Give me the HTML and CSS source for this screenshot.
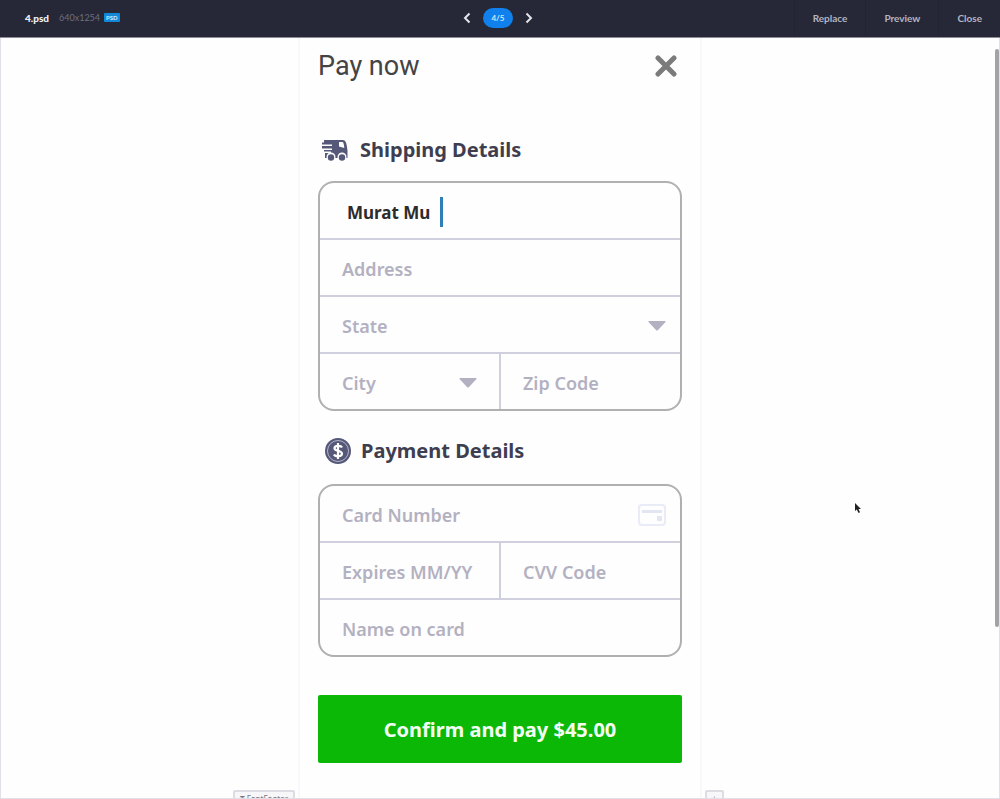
FILE: index.html
```html
<!DOCTYPE html>
<html lang="en">
<head>
<meta charset="UTF-8">
<meta name="viewport" content="width=device-width, initial-scale=1.0">
<title>4.psd</title>
<link rel="stylesheet" href="styles.css">
</head>
<body>
<header class="topbar">
  <div class="file">
    <span class="file-name">4.psd</span>
    <span class="file-size">640x1254</span>
    <span class="file-type">PSD</span>
  </div>
  <nav class="pager">
    <button class="arrow" aria-label="Previous">
      <svg width="8" height="12" viewBox="0 0 8 12"><path d="M6.500 1.500 2 6l4.500 4.500"/></svg>
    </button>
    <span class="page">4/5</span>
    <button class="arrow" aria-label="Next">
      <svg width="8" height="12" viewBox="0 0 8 12"><path d="M1.500 1.500 6 6l-4.500 4.500"/></svg>
    </button>
  </nav>
  <div class="actions">
    <button class="action">Replace</button>
    <button class="action">Preview</button>
    <button class="action">Close</button>
  </div>
</header>

<main class="stage">
  <form class="artboard">
    <div class="title-row">
      <h1>Pay now</h1>
      <button type="button" class="close" aria-label="Close form">
        <svg width="22" height="22" viewBox="0 0 22 22"><path d="M3 3 19 19M19 3 3 19"/></svg>
      </button>
    </div>

    <h2 class="shipping-title">
      <svg width="26" height="22" viewBox="0 0 26 22">
        <path fill="#56587a" d="M2 1h19c2.500 0 3.500 3 4 7l.5 4v7H3v-5h6v-1.500H2V11h8V9.500H0V7h10V5.500H0V3.500h2z"/>
        <path fill="#fefefe" d="M17 3h3.500c1 0 1.500 3 1.800 6L17 7.500z"/>
        <circle cx="9" cy="18" r="4.500" fill="#fefefe"/>
        <circle cx="20" cy="18" r="4.500" fill="#fefefe"/>
        <circle cx="9" cy="18.500" r="3.200" fill="#56587a"/>
        <circle cx="20" cy="18.500" r="3.200" fill="#56587a"/>
      </svg>
      Shipping Details
    </h2>
    <div class="group">
      <div class="row">
        <div class="field active">
          <input type="text" class="typed" value="Murat Mu" aria-label="Full name">
          <span class="caret"></span>
        </div>
      </div>
      <div class="row">
        <div class="field"><input type="text" placeholder="Address" aria-label="Address"></div>
      </div>
      <div class="row">
        <div class="field">
          <select aria-label="State"><option>State</option></select>
          <svg class="drop" width="18" height="10" viewBox="0 0 18 10"><path d="M1 0h16q1 0 .5 1L10 9q-1 1-2 0L.5 1Q0 0 1 0z"/></svg>
        </div>
      </div>
      <div class="row">
        <div class="field">
          <select aria-label="City"><option>City</option></select>
          <svg class="drop" width="18" height="10" viewBox="0 0 18 10"><path d="M1 0h16q1 0 .5 1L10 9q-1 1-2 0L.5 1Q0 0 1 0z"/></svg>
        </div>
        <div class="field"><input type="text" placeholder="Zip Code" aria-label="Zip Code"></div>
      </div>
    </div>

    <h2 class="payment-title">
      <svg width="26" height="26" viewBox="0 0 26 26">
        <circle cx="13" cy="13" r="13" fill="#56587a"/>
        <circle cx="13" cy="13" r="10.500" fill="none" stroke="#b4b5c8"/>
        <path d="M17 9.500C16 7.500 9.500 7 9.500 10.200c0 3.300 7.500 2 7.500 5.500 0 3.300-7 3-8 .8M13 5v16" fill="none" stroke="#fefefe" stroke-width="2.200"/>
      </svg>
      Payment Details
    </h2>
    <div class="group">
      <div class="row">
        <div class="field">
          <input type="text" placeholder="Card Number" aria-label="Card Number">
          <svg class="card" width="28" height="22" viewBox="0 0 28 22">
            <rect x="1" y="1" width="26" height="20" rx="3" fill="none" stroke="#e9ecf7" stroke-width="2"/>
            <path fill="#e2e6f3" d="M4 6h20v3H4zM19 12h5v5h-5z"/>
          </svg>
        </div>
      </div>
      <div class="row">
        <div class="field"><input type="text" placeholder="Expires MM/YY" aria-label="Expires MM/YY"></div>
        <div class="field"><input type="text" placeholder="CVV Code" aria-label="CVV Code"></div>
      </div>
      <div class="row">
        <div class="field"><input type="text" placeholder="Name on card" aria-label="Name on card"></div>
      </div>
    </div>

    <button type="button" class="pay">Confirm and pay $45.00</button>
  </form>

  <span class="tag tag-left"><b>T</b> FontFooter</span>
  <span class="tag tag-right">+</span>
  <div class="scrollbar"></div>
  <svg class="pointer" width="8" height="12" viewBox="0 0 8 12"><path d="M1 1v8l1.800-1.500L4.500 11l1.500-.7-1.500-3.300H7z"/></svg>
</main>
</body>
</html>
```
FILE: styles.css
```css
* {
  box-sizing: border-box;
}
body {
  margin: 0;
  height: 100vh;
  display: flex;
  flex-direction: column;
  background: #fefefe;
  font-family: "Noto Sans", sans-serif;
}
button,
input,
select {
  font-family: inherit;
  border: 0;
  padding: 0;
  background: none;
}
button {
  cursor: pointer;
}

/* top bar */
.topbar {
  height: 38px;
  flex-shrink: 0;
  display: grid;
  grid-template-columns: 1fr auto 1fr;
  align-items: center;
  padding-bottom: 2px;
  background: #262838;
  border-bottom: 1px solid #8d8d98;
  font-family: Lato, sans-serif;
}
.file {
  display: flex;
  align-items: center;
  gap: 10px;
  padding-left: 25px;
}
.file-name {
  color: #f0f0f4;
  font-size: 10px;
  font-weight: 900;
}
.file-size {
  color: #6d6e7c;
  font-size: 9px;
}
.file-type {
  margin-left: -6px;
  padding: 0 2px;
  border-radius: 1px;
  background: #1488d8;
  color: #cfeaff;
  font-size: 6px;
  font-weight: 700;
  line-height: 9px;
}
.pager {
  display: flex;
  align-items: center;
  gap: 12px;
  padding-right: 4px;
}
.arrow {
  display: flex;
}
.arrow path {
  fill: none;
  stroke: #e4e4ec;
  stroke-width: 2;
}
.page {
  width: 30px;
  border-radius: 10px;
  background: #0f80ec;
  color: #cfe6ff;
  font-size: 8px;
  font-weight: 700;
  line-height: 20px;
  text-align: center;
}
.actions {
  display: flex;
  justify-content: flex-end;
  align-self: stretch;
}
.action {
  padding: 0 18px;
  border-left: 1px solid #222433;
  color: #b4b5c0;
  font-size: 10px;
  font-weight: 700;
}

/* canvas */
.stage {
  position: relative;
  flex: 1;
  overflow: hidden;
  border: 1px solid #e0e0e6;
  border-top: 0;
}
.artboard {
  max-width: 404px;
  height: 100%;
  margin: 0 auto;
  padding: 0 18px;
  border: solid #f8f8fa;
  border-width: 0 2px;
}
.title-row {
  display: flex;
  align-items: center;
  justify-content: space-between;
  height: 56px;
  padding-right: 5px;
}
h1 {
  margin: 0;
  color: #444;
  font-family: Roboto, sans-serif;
  font-size: 27px;
  font-weight: 400;
}
.close {
  display: flex;
}
.close path {
  fill: none;
  stroke: #7b7b7b;
  stroke-width: 5;
  stroke-linecap: round;
}
h2 {
  display: flex;
  align-items: center;
  margin: 0;
  color: #3e3e50;
  font-size: 20px;
  font-weight: 700;
  line-height: 28px;
}
.shipping-title {
  gap: 12px;
  margin: 42px 0 17px;
  padding-left: 4px;
}
.payment-title {
  gap: 10px;
  margin: 26px 0 19px;
  padding-left: 7px;
}
.group {
  border: 2px solid #b0b0b0;
  border-radius: 16px;
}
.row {
  display: flex;
}
.row + .row {
  border-top: 2px solid #cfcfdd;
}
.field {
  flex: 1;
  min-width: 0;
  height: 55px;
  display: flex;
  align-items: center;
  padding: 3px 14px 0 22px;
}
.field + .field {
  border-left: 2px solid #cfcfdd;
}
.field input,
.field select {
  flex: 1;
  min-width: 0;
  outline: 0;
  appearance: none;
  color: #b3b1c1;
  font-size: 18px;
  font-weight: 600;
}
.field input::placeholder {
  color: #b3b1c1;
}
.active {
  padding-left: 27px;
  gap: 4px;
}
.field .typed {
  flex: 0 0 89px;
  color: #2c2c2c;
  font-size: 17px;
  font-weight: 700;
}
.caret {
  width: 3px;
  height: 30px;
  background: #2f7fb8;
}
.drop {
  fill: #b3b1c1;
}
.row .field:not(:last-child) .drop {
  margin-right: 8px;
}
.pay {
  width: 100%;
  height: 68px;
  margin-top: 38px;
  border-radius: 2px;
  background: #0bb805;
  color: #f4fff4;
  font-size: 20px;
  font-weight: 700;
}

/* things lying over the canvas */
.tag {
  position: absolute;
  bottom: -8px;
  height: 16px;
  padding: 0 5px;
  border: 2px solid #dcdce2;
  border-radius: 2px;
  background: #f7f7f9;
  color: #77777f;
  font-size: 8px;
  line-height: 14px;
}
.tag-left {
  right: calc(50% + 205px);
}
.tag-right {
  left: calc(50% + 205px);
}
.scrollbar {
  position: absolute;
  top: 11px;
  right: 0;
  width: 4px;
  height: 76%;
  border-radius: 2px;
  background: #a3a3a5;
}
.pointer {
  position: absolute;
  top: 61%;
  left: 85.5%;
  fill: #222;
}
```
